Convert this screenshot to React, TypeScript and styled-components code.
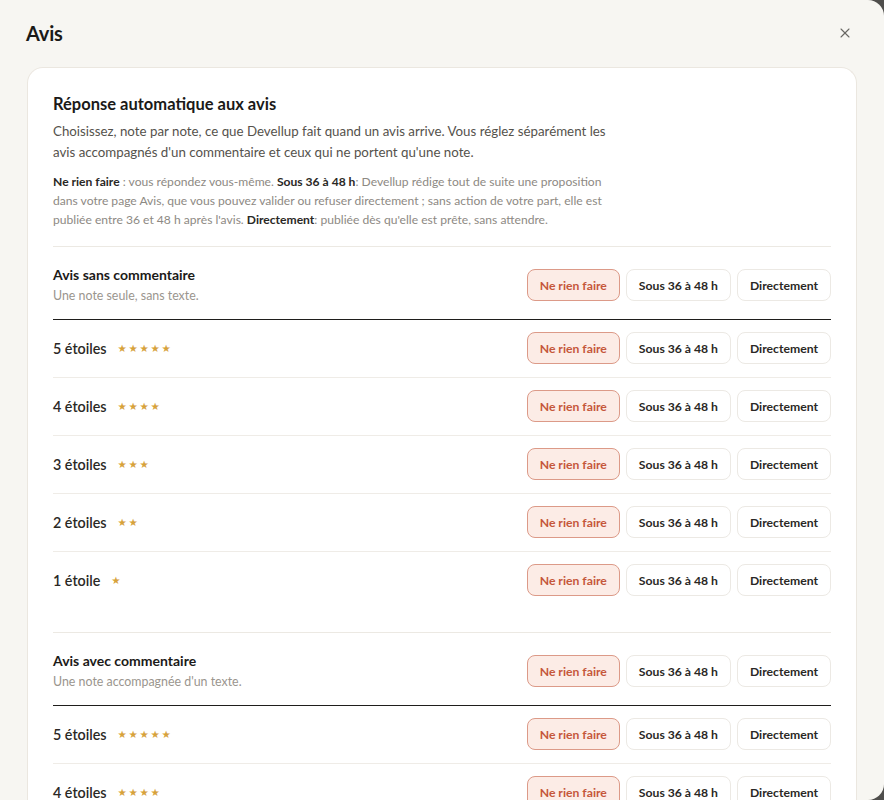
import React from "react";
import styled, { createGlobalStyle } from "styled-components";
import { X } from "lucide-react";

const Global = createGlobalStyle`
  html, body { margin: 0; padding: 0; background: #4f4e4c; }
  body { font-family: Lato, "Noto Sans", sans-serif; color: #1f1d1a; }
  * { box-sizing: border-box; }
`;

const Modal = styled.div`
  width: 884px;
  height: 800px;
  background: #f7f6f2;
  border-top-right-radius: 16px;
  border-bottom-right-radius: 16px;
  overflow: hidden;
  padding: 18px 27px 0 27px;
  display: flex;
  flex-direction: column;
`;

const TopBar = styled.div`
  display: flex;
  align-items: center;
  justify-content: space-between;
  height: 30px;
  margin-bottom: 19px;
`;

const Title = styled.h1`
  margin: 0 0 0 -1px;
  font-size: 20px;
  font-weight: 700;
  line-height: 30px;
  letter-spacing: -0.2px;
  color: #1b1a18;
`;

const CloseButton = styled.button`
  border: none;
  background: transparent;
  padding: 0;
  display: flex;
  align-items: center;
  justify-content: center;
  width: 24px;
  height: 24px;
  color: #6a6864;
`;

const Card = styled.div`
  flex: 1;
  background: #ffffff;
  border: 1px solid #ebe7e0;
  border-bottom: none;
  border-radius: 16px 16px 0 0;
  padding: 27px 25px 0 25px;
`;

const Heading = styled.h2`
  margin: 0;
  font-size: 16.5px;
  line-height: 18px;
  font-weight: 700;
  color: #1b1a18;
`;

const Lead = styled.p`
  margin: 8px 0 0 0;
  max-width: 572px;
  font-size: 13.3px;
  line-height: 21px;
  color: #55524c;
`;

const Help = styled.p`
  margin: 9px 0 0 0;
  max-width: 562px;
  font-size: 12.1px;
  line-height: 19px;
  color: #8d8983;
  b { color: #2a2825; font-weight: 700; }
`;

const Section = styled.section<{ $first?: boolean }>`
  border-top: 1px solid #ece9e3;
  margin-top: ${(p) => (p.$first ? "17px" : "22px")};
`;

const SectionHeader = styled.div`
  display: flex;
  align-items: center;
  justify-content: space-between;
  padding: 19px 0 15px 0;
  border-bottom: 1px solid #1f1e1c;
`;

const HeaderText = styled.div`
  display: flex;
  flex-direction: column;
  gap: 4px;
`;

const SectionTitle = styled.div`
  font-size: 14px;
  line-height: 18px;
  font-weight: 700;
  color: #1b1a18;
`;

const SectionSub = styled.div`
  font-size: 12.4px;
  line-height: 16px;
  color: #9a958e;
`;

const Row = styled.div<{ $last?: boolean }>`
  display: flex;
  align-items: center;
  justify-content: space-between;
  padding: 12px 0 13px 0;
  border-bottom: 1px solid ${(p) => (p.$last ? "transparent" : "#efece7")};
`;

const RowLabel = styled.div`
  display: flex;
  align-items: center;
  gap: 11px;
  font-size: 14.3px;
  font-weight: 600;
  color: #2a2825;
`;

const Stars = styled.span`
  font-family: "DejaVu Sans", sans-serif;
  font-size: 10.4px;
  letter-spacing: 1.7px;
  color: #d7a23b;
`;

const Options = styled.div`
  display: flex;
  gap: 6px;
`;

const Option = styled.button<{ $active?: boolean }>`
  height: 32px;
  padding: 0 12px;
  border-radius: 8px;
  font-family: Lato, "Noto Sans", sans-serif;
  font-size: 12.2px;
  font-weight: 700;
  border: 1px solid ${(p) => (p.$active ? "#dc9a88" : "#ece9e4")};
  background: ${(p) => (p.$active ? "#fcece6" : "#ffffff")};
  color: ${(p) => (p.$active ? "#c5573b" : "#2a2825")};
  cursor: pointer;
`;

const OPTIONS = ["Ne rien faire", "Sous 36 à 48 h", "Directement"];

const Choice = () => (
  <Options>
    {OPTIONS.map((o, i) => (
      <Option key={o} $active={i === 0}>
        {o}
      </Option>
    ))}
  </Options>
);

const ratings = [
  { label: "5 étoiles", n: 5 },
  { label: "4 étoiles", n: 4 },
  { label: "3 étoiles", n: 3 },
  { label: "2 étoiles", n: 2 },
  { label: "1 étoile", n: 1 },
];

const Block = ({ first, title, sub }: { first?: boolean; title: string; sub: string }) => (
  <Section $first={first}>
    <SectionHeader>
      <HeaderText>
        <SectionTitle>{title}</SectionTitle>
        <SectionSub>{sub}</SectionSub>
      </HeaderText>
      <Choice />
    </SectionHeader>
    {ratings.map((r, i) => (
      <Row key={r.label} $last={i === ratings.length - 1}>
        <RowLabel>
          {r.label}
          <Stars>{"★".repeat(r.n)}</Stars>
        </RowLabel>
        <Choice />
      </Row>
    ))}
  </Section>
);

export default function App() {
  return (
    <>
      <Global />
      <Modal>
        <TopBar>
          <Title>Avis</Title>
          <CloseButton aria-label="Fermer">
            <X size={16} strokeWidth={1.6} />
          </CloseButton>
        </TopBar>
        <Card>
          <Heading>Réponse automatique aux avis</Heading>
          <Lead>
            Choisissez, note par note, ce que Devellup fait quand un avis arrive. Vous réglez séparément les
            avis accompagnés d'un commentaire et ceux qui ne portent qu'une note.
          </Lead>
          <Help>
            <b>Ne rien faire</b> : vous répondez vous-même. <b>Sous 36 à 48 h</b>: Devellup rédige tout de suite une
            proposition dans votre page Avis, que vous pouvez valider ou refuser directement ; sans action de votre
            part, elle est publiée entre 36 et 48 h après l'avis. <b>Directement</b>: publiée dès qu'elle est prête,
            sans attendre.
          </Help>
          <Block first title="Avis sans commentaire" sub="Une note seule, sans texte." />
          <Block title="Avis avec commentaire" sub="Une note accompagnée d'un texte." />
        </Card>
      </Modal>
    </>
  );
}
